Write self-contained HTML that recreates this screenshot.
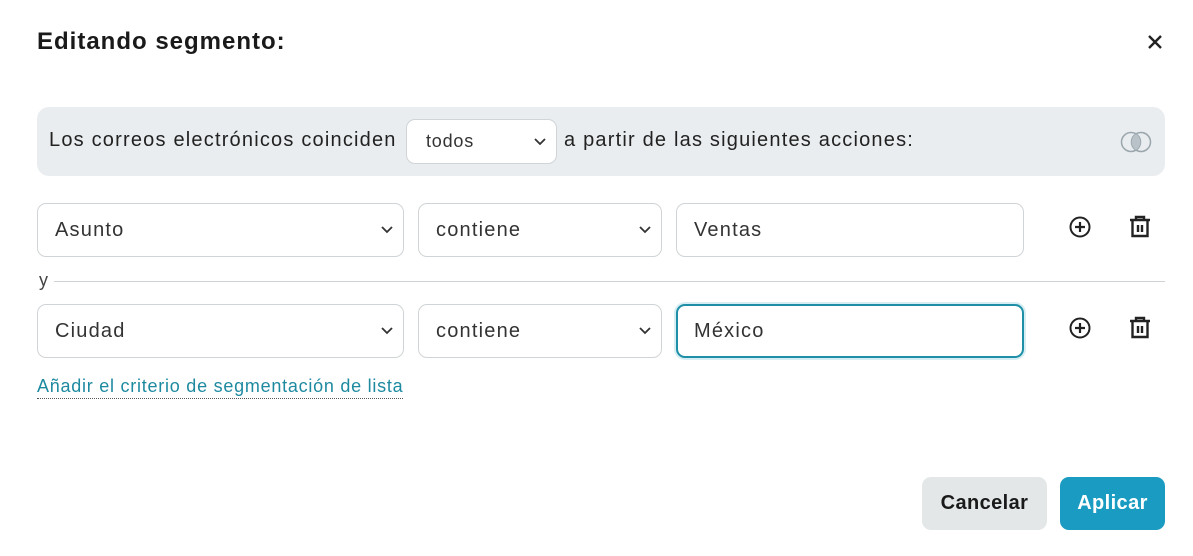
<!DOCTYPE html>
<html><head><meta charset="utf-8"><style>
*{box-sizing:border-box;margin:0;padding:0}
body{width:1193px;height:556px;background:#fff;font-family:"Liberation Sans",sans-serif;color:#222;position:relative;overflow:hidden}
.a{position:absolute}
h1{position:absolute;left:37px;top:28px;font-size:24px;font-weight:bold;color:#1a1a1a;letter-spacing:1px}
.band{left:37px;top:107px;width:1128px;height:69px;background:#e9edef;border-radius:12px}
.band .t{position:absolute;top:22px;font-size:20px;color:#222;letter-spacing:1.2px;white-space:nowrap}
.sel{position:absolute;border:1px solid #d0d4d6;border-radius:9px;background:#fff;font-size:20px;color:#333;padding-left:17px;display:flex;align-items:center;letter-spacing:1.2px}
.sel svg{position:absolute;right:10px;top:50%;margin-top:-4px}
.focus{border:2px solid #1e8fa6;box-shadow:0 0 0 2px #d6eef3}
</style></head><body>
<h1>Editando segmento:</h1>
<svg class="a" style="left:1147px;top:34px" width="16" height="16" viewBox="0 0 16 16"><path d="M2 2L14 14M14 2L2 14" stroke="#222" stroke-width="2.4"/></svg>
<div class="a band">
<span class="t" style="left:12px">Los correos electrónicos coinciden</span>
<div class="sel" style="left:369px;top:12px;width:151px;height:45px;font-size:18px;padding-left:19px;letter-spacing:0.8px">todos<svg width="12" height="8" viewBox="0 0 12 8"><path d="M1 1L6 6L11 1" stroke="#333" stroke-width="1.8" fill="none"/></svg></div>
<span class="t" style="left:527px">a partir de las siguientes acciones:</span>
<svg class="a" style="left:1082px;top:24px" width="36" height="22" viewBox="0 0 36 22"><circle cx="12" cy="11" r="9.5" fill="none" stroke="#9aa6ad" stroke-width="1.5"/><circle cx="22" cy="11" r="9.5" fill="none" stroke="#9aa6ad" stroke-width="1.5"/><path d="M17 3a9.5 9.5 0 0 1 0 16a9.5 9.5 0 0 1 0-16z" fill="#b8c2c8"/></svg>
</div>
<div class="sel" style="left:37px;top:203px;width:367px;height:54px">Asunto<svg width="12" height="8" viewBox="0 0 12 8"><path d="M1 1L6 6L11 1" stroke="#333" stroke-width="1.8" fill="none"/></svg></div>
<div class="sel" style="left:418px;top:203px;width:244px;height:54px">contiene<svg width="12" height="8" viewBox="0 0 12 8"><path d="M1 1L6 6L11 1" stroke="#333" stroke-width="1.8" fill="none"/></svg></div>
<div class="sel" style="left:676px;top:203px;width:348px;height:54px">Ventas</div>
<div class="a" style="left:39px;top:270px;font-size:18px;color:#444">y</div>
<div class="a" style="left:54px;top:281px;width:1111px;height:1px;background:#cfd3d5"></div>
<div class="sel" style="left:37px;top:304px;width:367px;height:54px">Ciudad<svg width="12" height="8" viewBox="0 0 12 8"><path d="M1 1L6 6L11 1" stroke="#333" stroke-width="1.8" fill="none"/></svg></div>
<div class="sel" style="left:418px;top:304px;width:244px;height:54px">contiene<svg width="12" height="8" viewBox="0 0 12 8"><path d="M1 1L6 6L11 1" stroke="#333" stroke-width="1.8" fill="none"/></svg></div>
<div class="sel focus" style="left:676px;top:304px;width:348px;height:54px;padding-left:16px">México</div>
<svg class="a" style="left:1069px;top:216px" width="22" height="22" viewBox="0 0 22 22"><circle cx="11" cy="11" r="9.5" fill="none" stroke="#222" stroke-width="2"/><path d="M11 6v10M6 11h10" stroke="#222" stroke-width="2.2"/></svg>
<svg class="a" style="left:1129px;top:215px" width="22" height="24" viewBox="0 0 22 24"><path d="M1 5h20M7 5V2h8v3M3.5 5v16h15V5M9 10v7M13 10v7" stroke="#222" stroke-width="2.4" fill="none"/></svg>
<svg class="a" style="left:1069px;top:317px" width="22" height="22" viewBox="0 0 22 22"><circle cx="11" cy="11" r="9.5" fill="none" stroke="#222" stroke-width="2"/><path d="M11 6v10M6 11h10" stroke="#222" stroke-width="2.2"/></svg>
<svg class="a" style="left:1129px;top:316px" width="22" height="24" viewBox="0 0 22 24"><path d="M1 5h20M7 5V2h8v3M3.5 5v16h15V5M9 10v7M13 10v7" stroke="#222" stroke-width="2.4" fill="none"/></svg>
<div class="a" style="left:37px;top:376px;font-size:18px;color:#1e8aa0;border-bottom:1px dotted #555;padding-bottom:1px;white-space:nowrap;letter-spacing:0.75px">Añadir el criterio de segmentación de lista</div>
<div class="a" style="left:922px;top:477px;width:125px;height:53px;background:#e3e7e8;border-radius:9px;font-size:20px;font-weight:bold;color:#1a1a1a;display:flex;align-items:center;justify-content:center;letter-spacing:0.4px">Cancelar</div>
<div class="a" style="left:1060px;top:477px;width:105px;height:53px;background:#1a9cc2;border-radius:9px;font-size:20px;font-weight:bold;color:#fff;display:flex;align-items:center;justify-content:center;letter-spacing:0.4px">Aplicar</div>
</body></html>
